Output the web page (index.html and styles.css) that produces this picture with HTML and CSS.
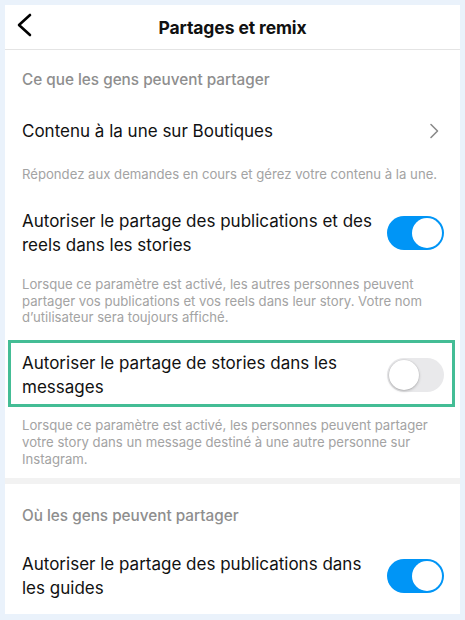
FILE: index.html
```html
<!DOCTYPE html>
<html lang="fr">
<head>
<meta charset="utf-8">
<link rel="stylesheet" href="styles.css">
</head>
<body>
<div class="panel">
  <header class="topbar">
    <svg class="back" width="16" height="24" viewBox="0 0 16 24"><polyline points="13,2 2,12 13,22" fill="none" stroke="#000" stroke-width="2.6" stroke-linecap="round" stroke-linejoin="round"/></svg>
    <h1 class="title">Partages et remix</h1>
  </header>

  <section class="group">
    <div class="sec-title">Ce que les gens peuvent partager</div>
    <div class="nav-row">
      <span class="label">Contenu à la une sur Boutiques</span>
      <svg class="chev" width="10" height="16" viewBox="0 0 10 16"><polyline points="2,1.5 8.5,8 2,14.5" fill="none" stroke="#8a8a8a" stroke-width="1.6" stroke-linecap="round" stroke-linejoin="round"/></svg>
    </div>
    <p class="desc d1">Répondez aux demandes en cours et gérez votre contenu à la une.</p>
    <div class="toggle-row r1">
      <span class="label">Autoriser le partage des publications et des reels dans les stories</span>
      <span class="switch on"><span class="knob"></span></span>
    </div>
    <p class="desc d2">Lorsque ce paramètre est activé, les autres personnes peuvent partager vos publications et vos reels dans leur story. Votre nom d’utilisateur sera toujours affiché.</p>
    <div class="highlight">
      <div class="toggle-row r2">
        <span class="label">Autoriser le partage de stories dans les messages</span>
        <span class="switch off"><span class="knob"></span></span>
      </div>
    </div>
    <p class="desc d3">Lorsque ce paramètre est activé, les personnes peuvent partager votre story dans un message destiné à une autre personne sur Instagram.</p>
  </section>

  <div class="band"></div>

  <section class="group">
    <div class="sec-title s2">Où les gens peuvent partager</div>
    <div class="toggle-row r3">
      <span class="label">Autoriser le partage des publications dans les guides</span>
      <span class="switch on"><span class="knob"></span></span>
    </div>
  </section>
</div>
</body>
</html>
```

FILE: styles.css
```css
* { box-sizing: border-box; }
html, body { margin: 0; padding: 0; }
body {
  background: #eaf2fb;
  padding: 5px 5px 6px 5px;
  font-family: Inter, "Liberation Sans", Arial, sans-serif;
  color: #111;
}
.panel {
  width: 455px;
  height: 609px;
  background: #fff;
  display: flex;
  flex-direction: column;
  overflow: hidden;
}
.panel > * { flex: none; }
.topbar {
  height: 45px;
  border-bottom: 1px solid #e4e4e4;
  display: flex;
  align-items: center;
  justify-content: center;
  position: relative;
}
.back {
  position: absolute;
  left: 12px;
  top: 8px;
}
.title {
  margin: 0;
  font-size: 17.5px;
  font-weight: 700;
  letter-spacing: -0.1px;
  padding-top: 0;
}
.group { display: flex; flex-direction: column; }
.sec-title {
  padding: 20px 17px 9px;
  font-size: 15.3px;
  line-height: 20px;
  font-weight: 500;
  color: #8e8e8e;
}
.nav-row {
  padding: 20px 21px 20px 17px;
  display: flex;
  align-items: center;
  justify-content: space-between;
}
.label {
  font-size: 17px;
  line-height: 24px;
  color: #111;
}
.desc {
  margin: 0;
  padding: 0 17px;
  font-size: 13.15px;
  line-height: 16.8px;
  color: #a3a3a3;
}
.d1 { padding-top: 3px; padding-bottom: 26px; }
.d2 { padding-top: 19px; }
.d3 { padding-top: 10px; padding-bottom: 10px; }
.toggle-row {
  display: flex;
  align-items: center;
  justify-content: space-between;
  padding: 0 16px 0 17px;
  gap: 8px;
}
.toggle-row .label { flex: 1; }
.highlight {
  margin: 14px 5px 0 3px;
  border: 3px solid #44bd95;
  padding: 8px 0 5px;
}
.r2 { padding: 0 8px 0 11px; }
.switch {
  flex: none;
  width: 57px;
  height: 34px;
  border-radius: 17px;
  display: flex;
  align-items: center;
  padding: 2px;
}
.switch.on { background: #0095f6; justify-content: flex-end; }
.switch.off { background: #e9e9eb; justify-content: flex-start; }
.knob {
  width: 30px;
  height: 30px;
  border-radius: 50%;
  background: #fff;
}
.switch.off .knob { box-shadow: 0 1px 3px rgba(0,0,0,0.25), 0 0 0 0.5px rgba(0,0,0,0.06); }
.band { height: 6px; background: #f2f2f2; }
.s2 { padding-top: 22px; padding-bottom: 26px; }
.r3 { padding-bottom: 15px; }
```
